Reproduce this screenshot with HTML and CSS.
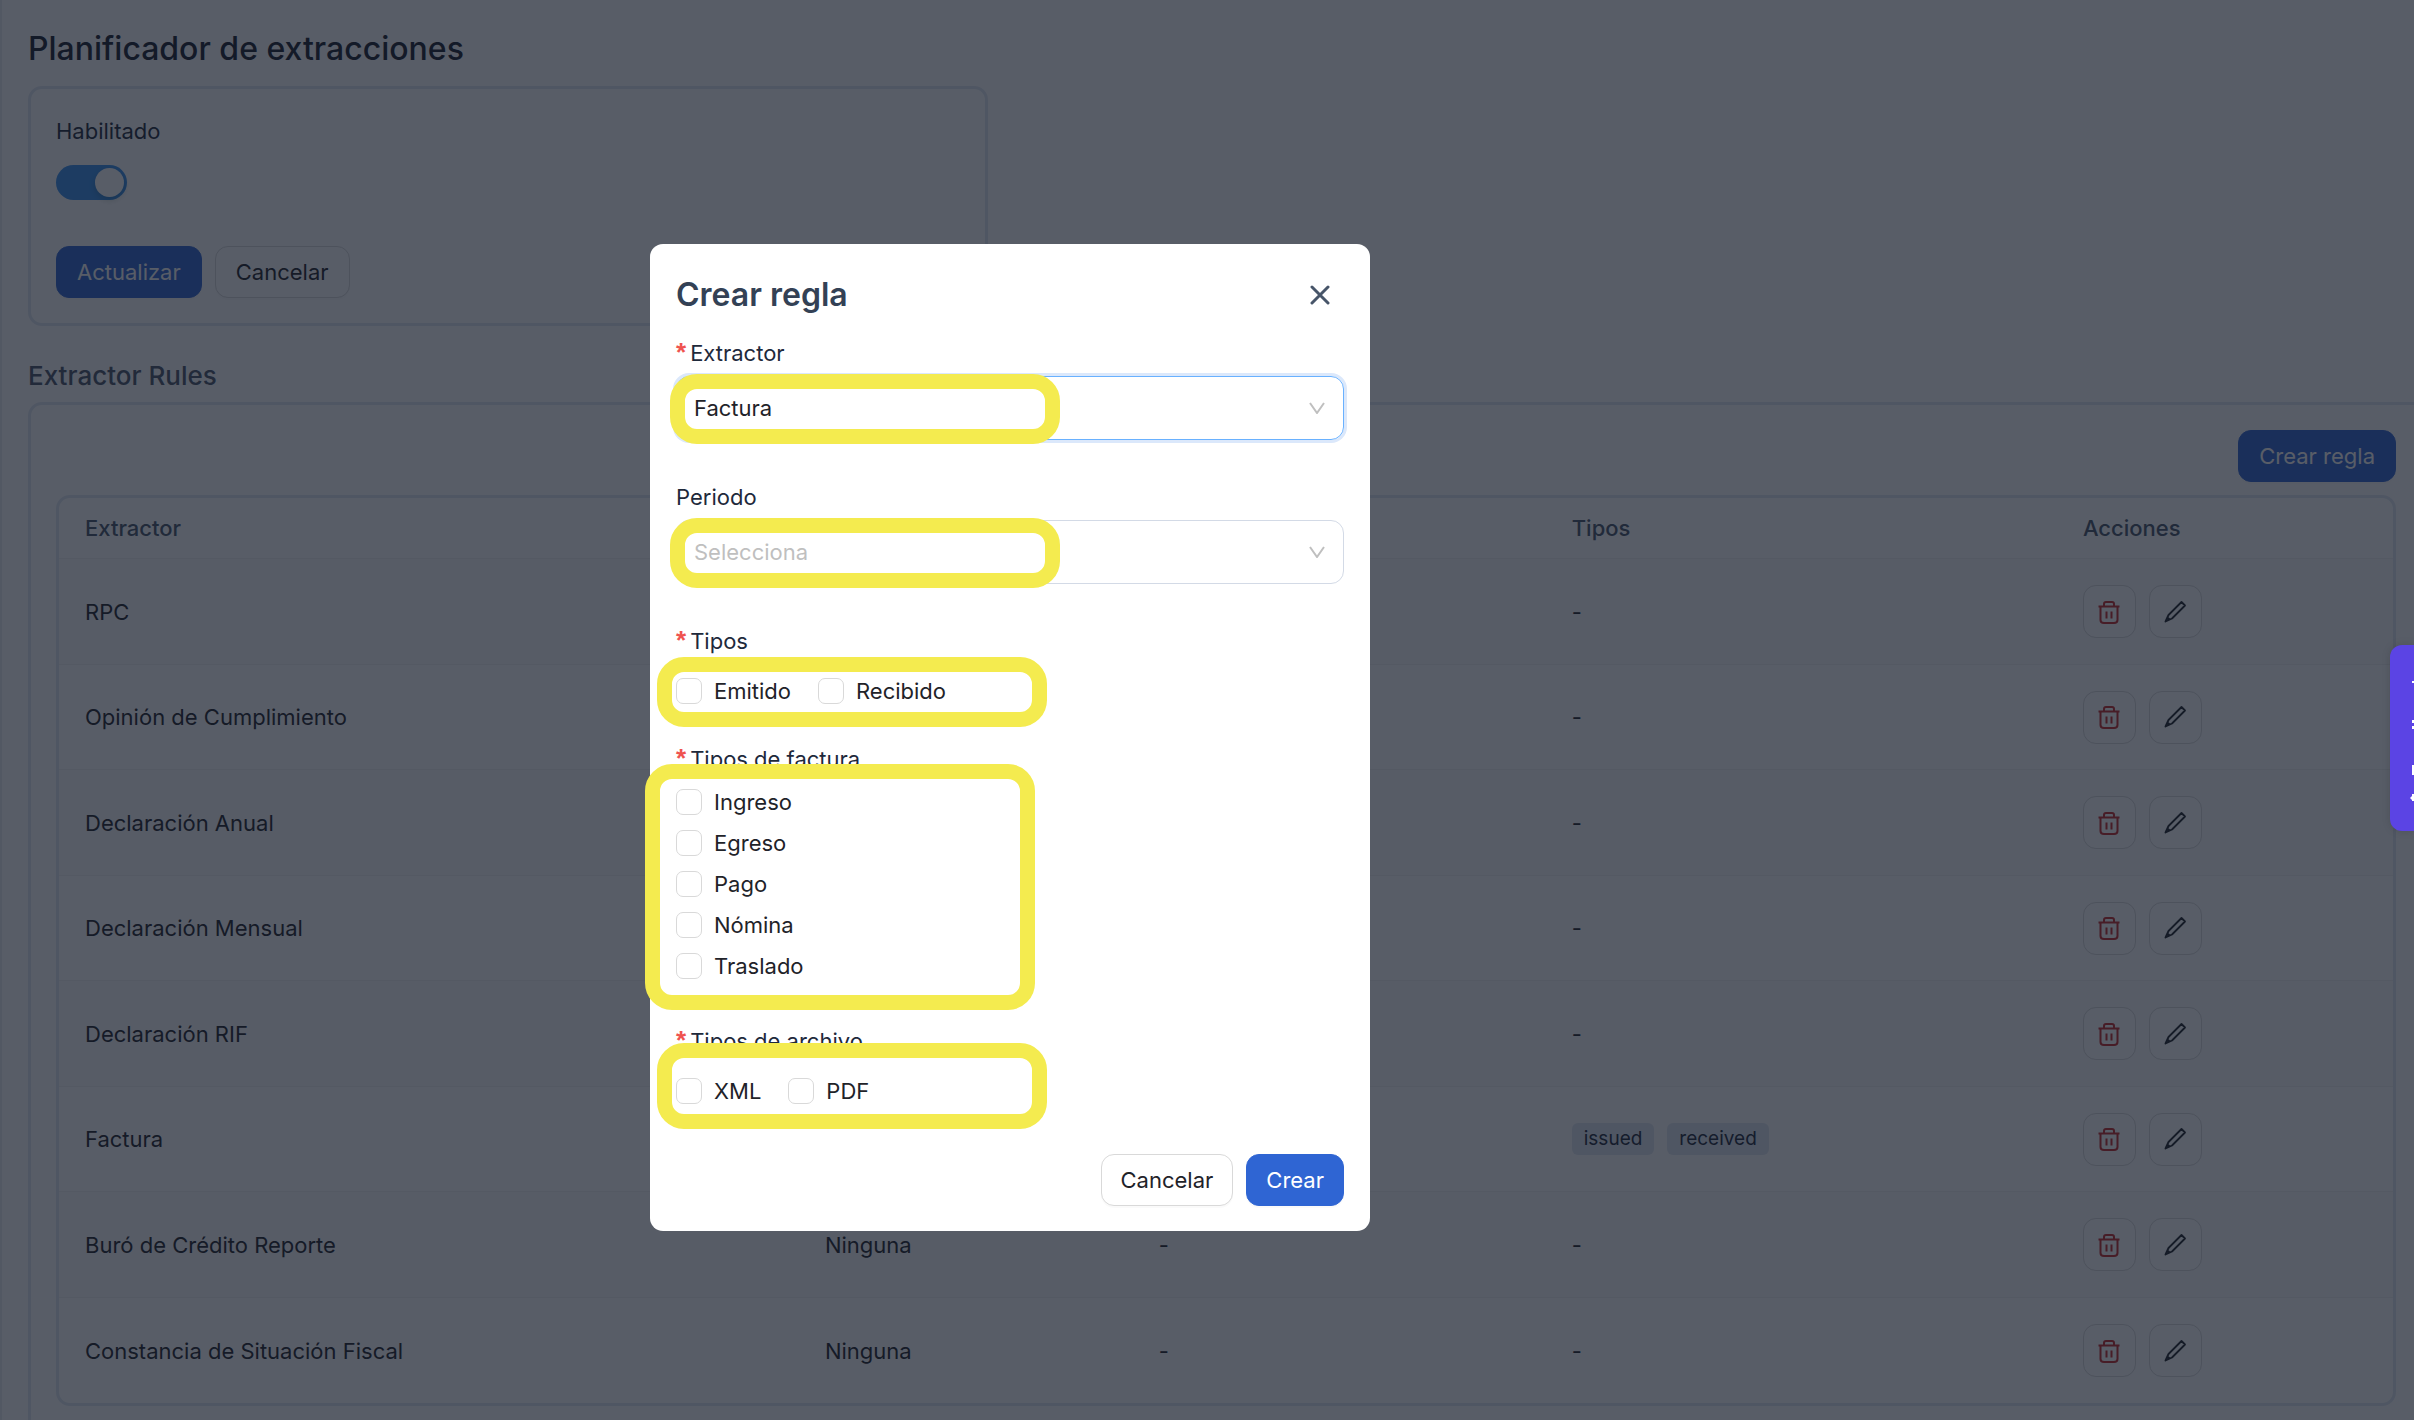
FILE: index.html
```html
<!DOCTYPE html>
<html lang="es">
<head>
    <meta charset="utf-8">
    <title>Planificador de extracciones</title>
    <link rel="stylesheet" href="styles.css">
</head>
<body>
    <svg class="sprite" aria-hidden="true">
        <symbol id="icon-trash" viewBox="0 0 24 24" fill="none" stroke="currentColor" stroke-width="2">
            <path d="M1.500 6.500H22.500M7 6.500V4Q7 2 9 2H15Q17 2 17 4V6.500M3.500 6.500V20Q3.500 23 7 23H17Q20.500 23 20.500 20V6.500M9.500 11.500V18.500M14.500 11.500V18.500"/>
        </symbol>
        <symbol id="icon-pencil" viewBox="0 0 24 24" fill="none" stroke="currentColor" stroke-width="1.800" stroke-linejoin="round">
            <path d="M18.500 2L22 5.500L9 18.500L2.500 21.500L5.500 15ZM2.500 21.500L4.500 17.500L6.500 19.500Z"/>
        </symbol>
    </svg>

    <main class="page">
        <h1>Planificador de extracciones</h1>

        <form class="card scheduler">
            <label for="enabled">Habilitado</label>
            <input type="checkbox" id="enabled" class="switch" checked>
            <div class="actions">
                <button type="button" class="btn btn-primary">Actualizar</button>
                <button type="button" class="btn">Cancelar</button>
            </div>
        </form>

        <h2>Extractor Rules</h2>

        <section class="card rules">
            <div class="toolbar">
                <button type="button" class="btn btn-primary">Crear regla</button>
            </div>
            <div class="table-wrap">
                <table>
                    <colgroup>
                        <col class="col-extractor">
                        <col class="col-period">
                        <col class="col-options">
                        <col class="col-types">
                        <col class="col-actions">
                    </colgroup>
                    <thead>
                        <tr>
                            <th>Extractor</th>
                            <th></th>
                            <th></th>
                            <th>Tipos</th>
                            <th>Acciones</th>
                        </tr>
                    </thead>
                    <tbody id="rules"></tbody>
                </table>
            </div>
        </section>
    </main>

    <div class="overlay">
        <form class="modal" role="dialog" aria-labelledby="modal-title">
            <header class="modal-header">
                <h3 id="modal-title">Crear regla</h3>
                <button type="button" class="close" aria-label="Cerrar">
                    <svg viewBox="0 0 20 20" width="20" height="20" fill="none" stroke="currentColor" stroke-width="3" stroke-linecap="round"><path d="M2 2L18 18M18 2L2 18"/></svg>
                </button>
            </header>

            <div class="field">
                <label class="required" for="extractor">Extractor</label>
                <div class="select focused marked">
                    <select id="extractor">
                        <option>Factura</option>
                    </select>
                    <svg viewBox="0 0 16 12" width="16" height="12" fill="none" stroke="currentColor" stroke-width="2"><path d="M1 1L8 11L15 1"/></svg>
                </div>
            </div>

            <div class="field">
                <label for="period">Periodo</label>
                <div class="select marked">
                    <select id="period" class="empty">
                        <option>Selecciona</option>
                    </select>
                    <svg viewBox="0 0 16 12" width="16" height="12" fill="none" stroke="currentColor" stroke-width="2"><path d="M1 1L8 11L15 1"/></svg>
                </div>
            </div>

            <fieldset class="types">
                <legend class="required">Tipos</legend>
                <div class="checks marked">
                    <label><input type="checkbox">Emitido</label>
                    <label><input type="checkbox">Recibido</label>
                </div>
            </fieldset>

            <fieldset class="invoice-types">
                <legend class="required">Tipos de factura</legend>
                <div class="checks marked">
                    <label><input type="checkbox">Ingreso</label>
                    <label><input type="checkbox">Egreso</label>
                    <label><input type="checkbox">Pago</label>
                    <label><input type="checkbox">Nómina</label>
                    <label><input type="checkbox">Traslado</label>
                </div>
            </fieldset>

            <fieldset class="file-types">
                <legend class="required">Tipos de archivo</legend>
                <div class="checks marked">
                    <label><input type="checkbox">XML</label>
                    <label><input type="checkbox">PDF</label>
                </div>
            </fieldset>

            <footer class="modal-footer">
                <button type="button" class="btn">Cancelar</button>
                <button type="button" class="btn btn-primary">Crear</button>
            </footer>
        </form>
    </div>

    <button type="button" class="side-tab" aria-label="Ayuda">
        <svg viewBox="0 0 4 186" width="4" height="186" fill="white"><path d="M2 36h2v2H2zM2 75h2v3H2zM2 81h2v3H2zM2 120h2v10H2zM0 153L2 151V149H4V156H2V155Z"/></svg>
    </button>

    <script src="script.js"></script>
</body>
</html>
```
FILE: styles.css
```css
*, *::before, *::after {
    box-sizing: border-box;
}
body {
    margin: 0;
    height: 100vh;
    overflow: hidden;
    font-family: Inter, sans-serif;
    font-size: 22px;
    line-height: 32px;
    color: #1f2329;
    background: white;
}
h1, h2, h3 {
    margin: 0;
    font-weight: 500;
}
.sprite {
    display: none;
}
.page {
    padding: 29px 0 0 26px;
    border-left: 2px solid #e9edf2;
}
h1 {
    font-size: 32px;
    line-height: 40px;
    color: #1a202c;
}
h2 {
    margin-top: 34px;
    font-size: 26px;
    color: #4a5568;
}
.card {
    border: 3px solid #e2e8f0;
    border-radius: 14px;
    padding: 26px 25px;
}
.scheduler {
    display: flex;
    flex-direction: column;
    align-items: flex-start;
    width: 40.250%;
    margin-top: 17px;
    padding-bottom: 25px;
    color: #1e293b;
}
.switch {
    appearance: none;
    display: flex;
    align-items: center;
    justify-content: flex-end;
    width: 71px;
    height: 35px;
    margin: 18px 0 46px;
    padding: 3px;
    border-radius: 18px;
    background: #3991ee;
}
.switch::before {
    content: "";
    width: 29px;
    height: 29px;
    border-radius: 50%;
    background: white;
    box-shadow: 0 3px 6px rgba(0,35,11,0.2);
}
.actions {
    display: flex;
    gap: 13px;
}
.btn {
    height: 52px;
    padding: 0 20px;
    border: 1px solid #d9d9d9;
    border-radius: 13px;
    background: white;
    color: #1f2329;
    font: inherit;
    cursor: pointer;
    box-shadow: 0 2px 0 rgba(0,0,0,0.02);
}
.btn-primary {
    border-color: #2f65d3;
    background: #2f65d3;
    color: white;
}
.rules {
    margin: 10px -20px 0 0;
    padding: 25px 35px 40px 25px;
}
.toolbar {
    display: flex;
    justify-content: flex-end;
    margin-bottom: 13px;
}
.table-wrap {
    border: 3px solid #e2e8f0;
    border-radius: 14px;
    overflow: hidden;
}
table {
    width: 100%;
    table-layout: fixed;
    border-collapse: separate;
    border-spacing: 0;
}
.col-extractor {
    width: 31.700%;
}
.col-period {
    width: 14.300%;
}
.col-options {
    width: 17.700%;
}
.col-types {
    width: 21.900%;
}
th, td {
    padding: 0 26px;
    border-bottom: 1px solid #f0f0f0;
    text-align: left;
}
th {
    height: 61px;
    font-weight: 500;
    color: #475569;
}
td {
    height: 105px;
}
tbody tr:nth-child(odd) td {
    height: 106px;
    background: #fafafa;
}
tbody tr:last-child td {
    border-bottom: 0;
}
.tags, .row-actions {
    display: flex;
    gap: 13px;
}
.tag {
    padding: 0 12px;
    border-radius: 6px;
    background: #e2e8f0;
    color: #1e293b;
    font-size: 19px;
}
.icon-btn {
    display: grid;
    place-items: center;
    width: 53px;
    height: 53px;
    padding: 0;
    border: 1px solid #d9d9d9;
    border-radius: 13px;
    background: white;
    color: #1f2329;
}
.icon-btn.danger {
    color: #c52828;
}
.overlay {
    position: fixed;
    inset: 0;
    display: flex;
    justify-content: center;
    align-items: flex-start;
    padding: 244px 394px 0 0;
    background: rgba(17,24,39,0.7);
}
.modal {
    width: 720px;
    padding: 27px 26px 25px;
    border-radius: 13px;
    background: white;
}
.modal-header {
    display: flex;
    justify-content: space-between;
    align-items: center;
    height: 48px;
    margin-bottom: 18px;
}
h3 {
    font-size: 32px;
    font-weight: 600;
    color: #334155;
}
.close {
    display: grid;
    padding: 14px;
    border: 0;
    background: none;
    color: #475569;
}
.field {
    margin-bottom: 41px;
}
.field > label, legend {
    display: block;
    padding: 0;
    color: #1e293b;
}
.required::before {
    content: "*";
    margin-right: 4px;
    font-family: "Liberation Sans", sans-serif;
    font-size: 26px;
    font-weight: bold;
    line-height: 0;
    color: #ef5350;
}
.select {
    display: flex;
    align-items: center;
    margin-top: 7px;
    height: 64px;
    padding-right: 18px;
    border: 1px solid #d3dae6;
    border-radius: 13px;
    color: #bfbfbf;
}
.select.focused {
    border-color: #69b1ff;
    box-shadow: 0 0 0 3px #dbe8fb;
}
select {
    appearance: none;
    flex: 1;
    height: 100%;
    padding: 0 17px;
    border: 0;
    background: none;
    color: #1f2329;
    font: inherit;
}
select.empty {
    color: #bfbfbf;
}
fieldset {
    margin: 0;
    padding: 0;
    border: 0;
}
.checks {
    display: flex;
    gap: 27px;
    padding: 18px 0 20px;
}
.checks label {
    display: flex;
    align-items: center;
    gap: 12px;
}
.checks input {
    appearance: none;
    width: 26px;
    height: 26px;
    margin: 0;
    border: 1px solid #d9d9d9;
    border-radius: 7px;
    background: white;
}
.invoice-types {
    margin-top: 16px;
}
.invoice-types .checks {
    flex-direction: column;
    gap: 9px;
    padding: 11px 0 28px;
}
.file-types {
    margin-top: 15px;
}
.file-types .checks {
    padding: 18px 0 22px;
}
/* yellow frames around what has to be filled in */
.marked {
    position: relative;
}
.marked::after {
    content: "";
    position: absolute;
    top: -3px;
    bottom: -5px;
    left: -7px;
    width: 390px;
    border: 15px solid #f4eb4f;
    border-radius: 27px;
    pointer-events: none;
}
.checks.marked::after {
    top: 0;
    bottom: 0;
    left: -19px;
}
.invoice-types .checks.marked::after {
    top: -11px;
    left: -31px;
}
.file-types .checks.marked::after {
    top: -14px;
}
.modal-footer {
    display: flex;
    justify-content: flex-end;
    gap: 13px;
    margin-top: 25px;
}
.modal-footer .btn {
    padding: 0 19px;
}
.side-tab {
    position: fixed;
    top: 645px;
    right: 0;
    display: flex;
    justify-content: flex-end;
    width: 24px;
    height: 186px;
    padding: 0;
    border: 0;
    border-radius: 12px 0 0 12px;
    background: #5b44e4;
    box-shadow: 0 0 8px rgba(0,0,0,0.15);
}
```
FILE: script.js
```js
const rules = [
    { name: 'RPC' },
    { name: 'Opinión de Cumplimiento' },
    { name: 'Declaración Anual' },
    { name: 'Declaración Mensual' },
    { name: 'Declaración RIF' },
    { name: 'Factura', types: ['issued', 'received'] },
    { name: 'Buró de Crédito Reporte' },
    { name: 'Constancia de Situación Fiscal' }
];

document.getElementById('rules').innerHTML = rules.map((rule) => `
    <tr>
        <td>${rule.name}</td>
        <td>Ninguna</td>
        <td>-</td>
        <td>${rule.types ? `<div class="tags">${rule.types.map((t) => `<span class="tag">${t}</span>`).join('')}</div>` : '-'}</td>
        <td>
            <div class="row-actions">
                <button type="button" class="icon-btn danger" aria-label="Eliminar"><svg width="24" height="24"><use href="#icon-trash"/></svg></button>
                <button type="button" class="icon-btn" aria-label="Editar"><svg width="24" height="24"><use href="#icon-pencil"/></svg></button>
            </div>
        </td>
    </tr>`).join('');
```
